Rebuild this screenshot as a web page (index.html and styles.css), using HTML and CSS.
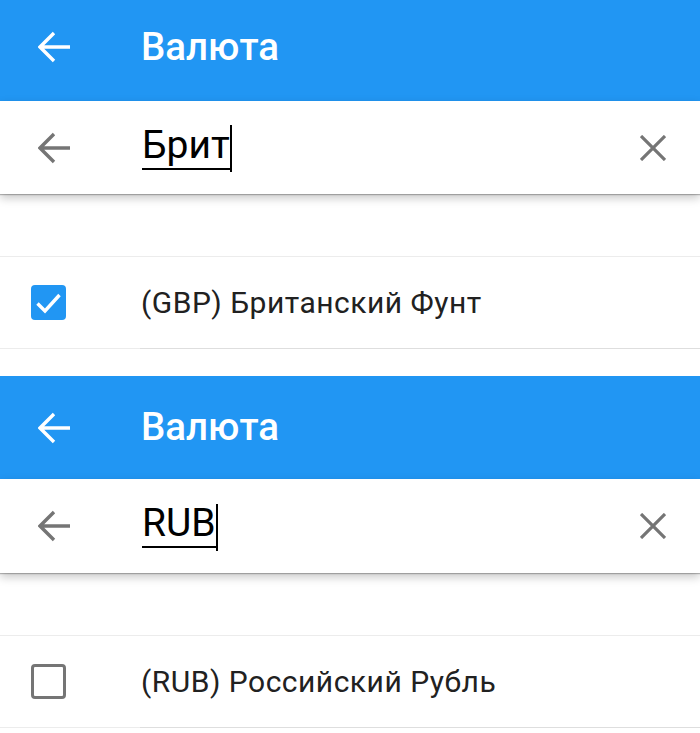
FILE: index.html
```html
<!DOCTYPE html>
<html lang="ru">
<head>
<meta charset="utf-8">
<title>Валюта</title>
<link rel="stylesheet" href="styles.css">
</head>
<body>
<section class="panel panel-first">
  <header class="appbar">
    <span class="icon icon-back-white">
      <svg viewBox="0 0 32 32" width="32" height="32"><path d="M32 16H2M16 2L2 16l14 14" fill="none" stroke="#fff" stroke-width="3.4"/></svg>
    </span>
    <h1 class="title">Валюта</h1>
  </header>
  <div class="searchbar">
    <span class="icon">
      <svg viewBox="0 0 32 32" width="32" height="32"><path d="M32 16H2M16 2L2 16l14 14" fill="none" stroke="#757575" stroke-width="3.4"/></svg>
    </span>
    <div class="query"><span class="query-text">Брит</span><span class="cursor"></span></div>
    <span class="icon icon-close">
      <svg viewBox="0 0 26 26" width="26" height="26"><path d="M1 1L25 25M25 1L1 25" fill="none" stroke="#757575" stroke-width="3.2"/></svg>
    </span>
  </div>
  <div class="spacer"></div>
  <div class="row">
    <span class="checkbox checked">
      <svg viewBox="0 0 35 35" width="35" height="35"><path d="M6.5 18.5l7.5 7.5L28.5 10" fill="none" stroke="#fff" stroke-width="3.4"/></svg>
    </span>
    <span class="label">(GBP) Британский Фунт</span>
  </div>
</section>
<section class="panel panel-second">
  <header class="appbar">
    <span class="icon icon-back-white">
      <svg viewBox="0 0 32 32" width="32" height="32"><path d="M32 16H2M16 2L2 16l14 14" fill="none" stroke="#fff" stroke-width="3.4"/></svg>
    </span>
    <h1 class="title">Валюта</h1>
  </header>
  <div class="searchbar">
    <span class="icon">
      <svg viewBox="0 0 32 32" width="32" height="32"><path d="M32 16H2M16 2L2 16l14 14" fill="none" stroke="#757575" stroke-width="3.4"/></svg>
    </span>
    <div class="query"><span class="query-text">RUB</span><span class="cursor"></span></div>
    <span class="icon icon-close">
      <svg viewBox="0 0 26 26" width="26" height="26"><path d="M1 1L25 25M25 1L1 25" fill="none" stroke="#757575" stroke-width="3.2"/></svg>
    </span>
  </div>
  <div class="spacer"></div>
  <div class="row">
    <span class="checkbox"></span>
    <span class="label">(RUB) Российский Рубль</span>
  </div>
</section>
</body>
</html>
```
FILE: styles.css
```css
* { box-sizing: border-box; }
html, body { margin: 0; padding: 0; background: #fff; }
body {
  width: 700px;
  height: 733px;
  overflow: hidden;
  font-family: Roboto, "Noto Sans", sans-serif;
}
.panel { display: flex; flex-direction: column; background: #fff; }
.panel-first { height: 376px; }
.panel-second { height: 357px; }

.appbar {
  display: flex;
  align-items: center;
  background: #2196f3;
  padding-left: 38px;
  flex: none;
}
.panel-first .appbar { height: 101px; padding-bottom: 7px; }
.panel-second .appbar { height: 103px; }

.icon { display: flex; width: 32px; flex: none; }
.title {
  margin: 0 0 0 71px;
  color: #fff;
  font-size: 38.5px;
  font-weight: 500;
  line-height: 1;
}

.searchbar {
  position: relative;
  z-index: 1;
  display: flex;
  align-items: center;
  height: 93px;
  padding: 0 34px 0 38px;
  background: #fff;
  box-shadow: 0 1px 1px rgba(0,0,0,0.25), 0 4px 9px rgba(0,0,0,0.22);
  flex: none;
}
.panel-second .searchbar { height: 94px; }
.query {
  flex: 1;
  display: flex;
  align-items: center;
  margin-left: 72px;
}
.query-text {
  font-size: 39px;
  line-height: 1;
  color: #000;
  border-bottom: 2px solid #000;
  padding-bottom: 3px;
}
.cursor {
  width: 2px;
  height: 47px;
  background: #000;
  margin-left: 0;
  margin-top: 2px;
}
.icon-close { width: 26px; }

.spacer { height: 62px; flex: none; }

.row {
  position: relative;
  display: flex;
  align-items: center;
  height: 93px;
  padding-left: 31px;
  border-top: 1px solid #ececec;
  border-bottom: 1px solid #ececec;
  flex: none;
}
.row::after {
  content: "";
  position: absolute;
  left: 140px;
  right: 0;
  bottom: -1px;
  height: 1px;
  background: #dedede;
}
.checkbox {
  display: flex;
  width: 35px;
  height: 35px;
  border-radius: 4px;
  border: 3px solid #757575;
  flex: none;
}
.checkbox.checked {
  border: none;
  background: #2196f3;
}
.label {
  margin-left: 75px;
  font-size: 30px;
  letter-spacing: 0.5px;
  color: #212121;
}
```
